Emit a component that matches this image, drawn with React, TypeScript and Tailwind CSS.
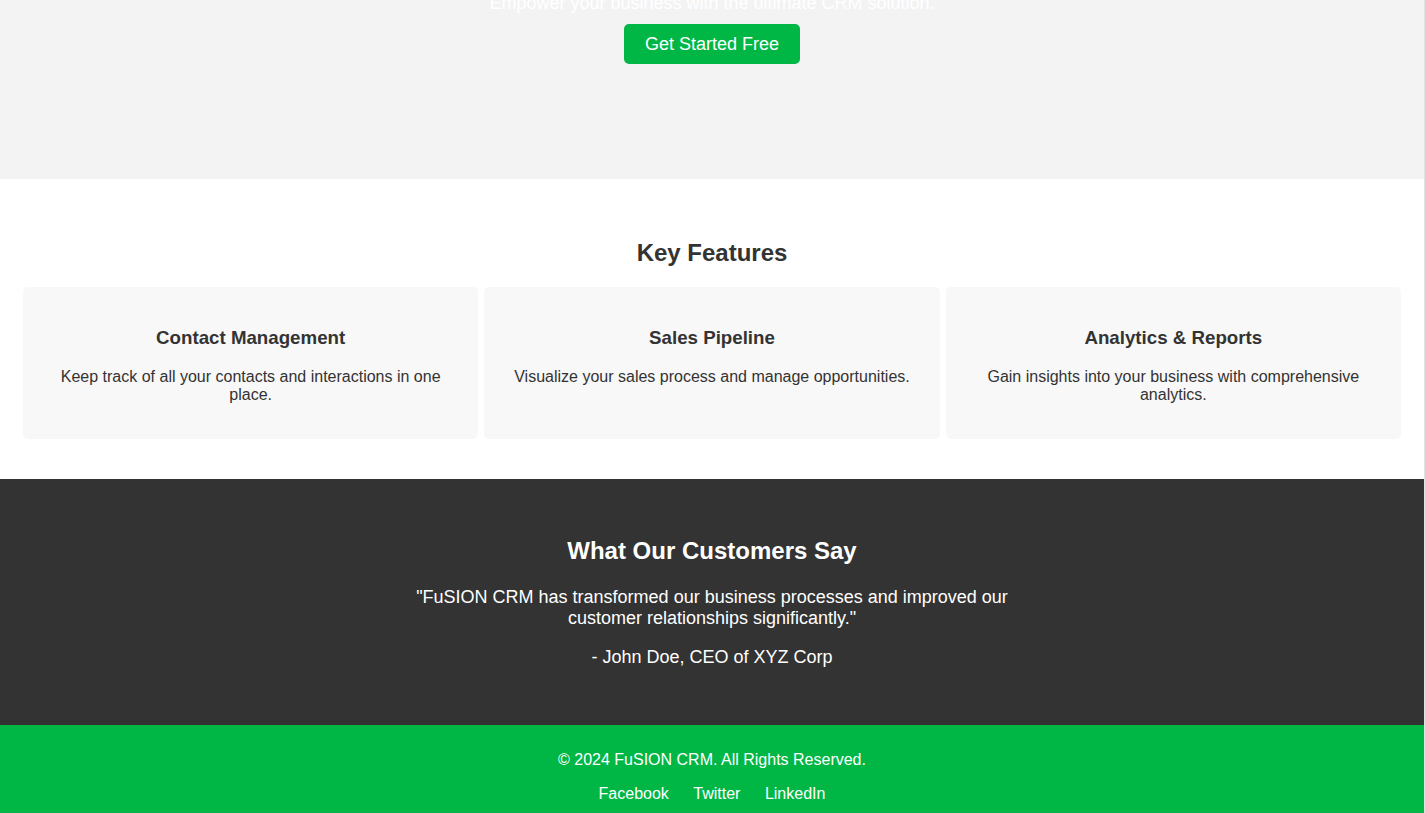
import React from "react";

const font = { fontFamily: '"Liberation Sans", Arial, Helvetica, sans-serif' };

const features = [
  { title: "Contact Management", desc: "Keep track of all your contacts and interactions in one place." },
  { title: "Sales Pipeline", desc: "Visualize your sales process and manage opportunities." },
  { title: "Analytics & Reports", desc: "Gain insights into your business with comprehensive analytics." },
];

export default function App() {
  return (
    <div className="flex w-[1425px] font-['Liberation_Sans',Arial,sans-serif]" style={font}>
      <div className="w-[1424px] -mt-[133px]">
        {/* Hero */}
        <section className="bg-[#f3f3f3] pt-[60px] pb-[115px] text-center text-white">
          <h1 className="text-[40px] leading-[46px] font-bold mb-[20px]">Welcome to FuSION CRM</h1>
          <p className="text-[18px] leading-[20.7px]">Empower your business with the ultimate CRM solution.</p>
          <a className="inline-block mt-[10px] bg-[#00b746] text-white text-[18px] leading-[20.7px] px-[21px] py-[10px] rounded-[5px]">
            Get Started Free
          </a>
        </section>

        {/* Features */}
        <section className="bg-white pt-[60px] pb-[40px] px-5 text-center text-[#333333]">
          <h2 className="text-[24px] leading-[27.6px] font-bold mb-[20px]">Key Features</h2>
          <div className="flex justify-around">
            {features.map((f) => (
              <div key={f.title} className="w-[calc(30%+40px)] bg-[#f8f8f8] rounded-[5px] p-5">
                <h3 className="text-[18.72px] leading-[21.5px] font-bold mt-[20px] mb-[19px]">{f.title}</h3>
                <p className="text-[16px] leading-[18.4px] mb-[15px]">{f.desc}</p>
              </div>
            ))}
          </div>
        </section>

        {/* Testimonials */}
        <section className="bg-[#333333] pt-[58px] pb-[57px] px-5 text-center text-white">
          <h2 className="text-[24px] leading-[27.6px] font-bold mb-[22px]">What Our Customers Say</h2>
          <div className="max-w-[600px] mx-auto">
            <p className="text-[18px] leading-[21px] mb-[18px]">
              "FuSION CRM has transformed our business processes and improved our customer relationships significantly."
            </p>
            <p className="text-[18px] leading-[21px]">- John Doe, CEO of XYZ Corp</p>
          </div>
        </section>

        {/* Footer */}
        <footer className="bg-[#00b746] py-[10px] text-center text-white">
          <p className="text-[16px] leading-[18.4px] my-4">© 2024 FuSION CRM. All Rights Reserved.</p>
          <div className="text-[16px] leading-[18.4px]">
            <a className="mx-[10px]">Facebook</a> <a className="mx-[10px]">Twitter</a>{" "}
            <a className="mx-[10px]">LinkedIn</a>
          </div>
        </footer>
      </div>
      <div className="w-px bg-[#e2e2e2] self-stretch" />
    </div>
  );
}
